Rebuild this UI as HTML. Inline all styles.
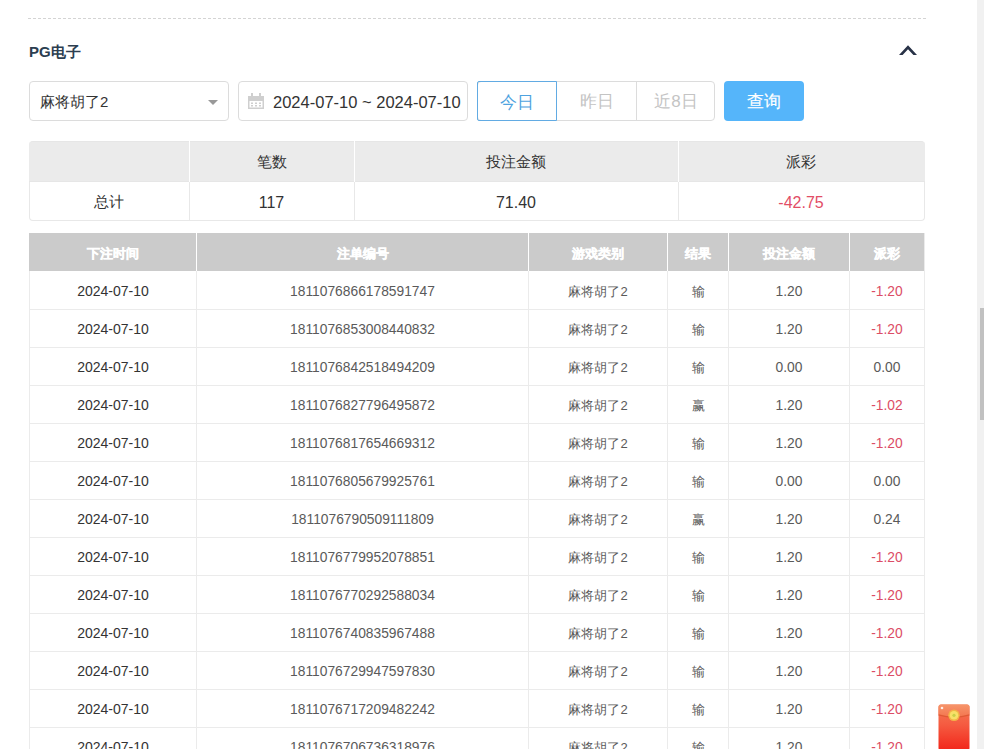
<!DOCTYPE html>
<html><head><meta charset="utf-8"><style>
*{box-sizing:border-box;margin:0;padding:0}
html,body{width:984px;height:749px;overflow:hidden;background:#fff;font-family:"Liberation Sans",sans-serif;color:#333}
div,span,svg{position:absolute}
.dash{left:28px;top:18px;width:898px;height:1px;background:repeating-linear-gradient(90deg,#d4d4d4 0 3px,transparent 3px 5px)}
.title{left:29px;top:43px;font-size:15px;font-weight:bold;color:#2c3e50;line-height:18px;white-space:nowrap}
.sel{left:29px;top:81px;width:200px;height:40px;border:1px solid #dcdcdc;border-radius:4px}
.sel .t{left:10px;top:1px;line-height:38px;font-size:15px;color:#333;white-space:nowrap}
.sel .tri{left:178px;top:18px;width:0;height:0;border-left:5px solid transparent;border-right:5px solid transparent;border-top:5px solid #999}
.date{left:238px;top:81px;width:230px;height:40px;border:1px solid #dcdcdc;border-radius:4px}
.date .t{left:34px;top:0;line-height:40px;font-size:16.5px;color:#333;white-space:nowrap}
.date svg{left:9px;top:11px}
.grp{left:477px;top:81px;width:238px;height:40px;border:1px solid #dcdcdc;border-radius:4px}
.grp .b{top:-1px;height:40px;line-height:40px;padding-top:1px;text-align:center;font-size:17px;color:#c4c4c4}
.grp .b1{left:-1px;width:80px;border:1px solid #62abe3;border-radius:2px 0 0 2px;color:#4fa3e0}
.grp .b2{left:79px;width:79px}
.grp .b3{left:158px;width:79px;border-left:1px solid #dcdcdc}
.q{left:724px;top:81px;width:80px;height:40px;border-radius:4px;background:#55b5fa;color:#fff;font-size:16.5px;font-weight:normal;-webkit-text-stroke:0.15px #fff;text-align:center;line-height:41px}
.c{text-align:center;white-space:nowrap}
.sbt{left:977px;top:0;width:7px;height:749px;background:#f1f1f1}
.sbth{left:980px;top:308px;width:4px;height:112px;background:#c1c1c1}
.env{left:938px;top:704px;width:32px;height:45px}
</style></head><body>
<div class="dash"></div><div class="title">PG电子</div>
<svg style="left:890px;top:40px" width="36" height="20" viewBox="890 40 36 20"><path d="M899 55 L908 45.3 L917 55 L913.4 55 L908 49.3 L902.6 55 Z" fill="#283247"/></svg>
<div class="sel"><span class="t">麻将胡了2</span><span class="tri"></span></div>
<div class="date"><svg width="16" height="17" viewBox="0 0 16 17"><g fill="#cfcfcf"><rect x="3" y="0" width="2" height="4"/><rect x="11" y="0" width="2" height="4"/><rect x="0" y="3" width="16" height="5"/><rect x="0" y="3" width="1.5" height="13"/><rect x="14.5" y="3" width="1.5" height="13"/><rect x="0" y="14.5" width="16" height="1.5"/><rect x="3" y="9.5" width="2" height="1.5"/><rect x="7" y="9.5" width="2" height="1.5"/><rect x="11" y="9.5" width="2" height="1.5"/><rect x="3" y="12" width="2" height="1.5"/><rect x="7" y="12" width="2" height="1.5"/><rect x="11" y="12" width="2" height="1.5"/></g></svg><span class="t">2024-07-10 ~ 2024-07-10</span></div>
<div class="grp"><div class="b b1">今日</div><div class="b b2">昨日</div><div class="b b3">近8日</div></div>
<div class="q">查询</div>
<div style="left:29px;top:141px;width:896px;height:41px;background:#ebebeb;border-radius:4px 4px 0 0;border-top:1px solid #e6e6e6;border-bottom:1px solid #e6e6e6"></div>
<div style="left:29px;top:182px;width:896px;height:39px;border:1px solid #e8e8e8;border-top:none;border-radius:0 0 4px 4px"></div>
<div style="left:189px;top:141px;width:1px;height:41px;background:#fff"></div>
<div style="left:189px;top:182px;width:1px;height:38px;background:#e8e8e8"></div>
<div style="left:354px;top:141px;width:1px;height:41px;background:#fff"></div>
<div style="left:354px;top:182px;width:1px;height:38px;background:#e8e8e8"></div>
<div style="left:678px;top:141px;width:1px;height:41px;background:#fff"></div>
<div style="left:678px;top:182px;width:1px;height:38px;background:#e8e8e8"></div>
<div class="c" style="left:29px;width:160px;top:182px;height:38px;line-height:40px;font-size:15px;color:#333">总计</div>
<div class="c" style="left:189px;width:165px;top:141px;height:41px;line-height:41px;font-size:15px;color:#333">笔数</div>
<div class="c" style="left:189px;width:165px;top:183px;height:38px;line-height:40px;font-size:16px;color:#333">117</div>
<div class="c" style="left:354px;width:324px;top:141px;height:41px;line-height:41px;font-size:15px;color:#333">投注金额</div>
<div class="c" style="left:354px;width:324px;top:183px;height:38px;line-height:40px;font-size:16px;color:#333">71.40</div>
<div class="c" style="left:678px;width:246px;top:141px;height:41px;line-height:41px;font-size:15px;color:#333">派彩</div>
<div class="c" style="left:678px;width:246px;top:183px;height:38px;line-height:40px;font-size:16px;color:#e24d66">-42.75</div>
<div style="left:29px;top:233px;width:896px;height:521px;border-left:1px solid #ebebeb;border-right:1px solid #ebebeb"></div>
<div style="left:29px;top:233px;width:895px;height:38px;background:#cbcbcb"></div>
<div style="left:196px;top:233px;width:1px;height:38px;background:#fff"></div>
<div style="left:196px;top:271px;width:1px;height:478px;background:#ebebeb"></div>
<div style="left:528px;top:233px;width:1px;height:38px;background:#fff"></div>
<div style="left:528px;top:271px;width:1px;height:478px;background:#ebebeb"></div>
<div style="left:667px;top:233px;width:1px;height:38px;background:#fff"></div>
<div style="left:667px;top:271px;width:1px;height:478px;background:#ebebeb"></div>
<div style="left:728px;top:233px;width:1px;height:38px;background:#fff"></div>
<div style="left:728px;top:271px;width:1px;height:478px;background:#ebebeb"></div>
<div style="left:849px;top:233px;width:1px;height:38px;background:#fff"></div>
<div style="left:849px;top:271px;width:1px;height:478px;background:#ebebeb"></div>
<div class="c" style="left:29px;width:168px;top:235px;height:38px;line-height:38px;font-size:13px;font-weight:bold;color:#fff;-webkit-text-stroke:0.35px #fff">下注时间</div>
<div class="c" style="left:196px;width:333px;top:235px;height:38px;line-height:38px;font-size:13px;font-weight:bold;color:#fff;-webkit-text-stroke:0.35px #fff">注单编号</div>
<div class="c" style="left:528px;width:140px;top:235px;height:38px;line-height:38px;font-size:13px;font-weight:bold;color:#fff;-webkit-text-stroke:0.35px #fff">游戏类别</div>
<div class="c" style="left:667px;width:62px;top:235px;height:38px;line-height:38px;font-size:13px;font-weight:bold;color:#fff;-webkit-text-stroke:0.35px #fff">结果</div>
<div class="c" style="left:728px;width:122px;top:235px;height:38px;line-height:38px;font-size:13px;font-weight:bold;color:#fff;-webkit-text-stroke:0.35px #fff">投注金额</div>
<div class="c" style="left:849px;width:76px;top:235px;height:38px;line-height:38px;font-size:13px;font-weight:bold;color:#fff;-webkit-text-stroke:0.35px #fff">派彩</div>
<div style="left:29px;top:309px;width:895px;height:1px;background:#ebebeb"></div>
<div class="c" style="left:29px;width:168px;top:272px;height:38px;line-height:38px;font-size:14px;color:#333">2024-07-10</div>
<div class="c" style="left:196px;width:333px;top:273px;height:38px;line-height:38px;font-size:13.8px;color:#5a5a5a">1811076866178591747</div>
<div class="c" style="left:528px;width:140px;top:273px;height:38px;line-height:38px;font-size:13px;color:#5a5a5a">麻将胡了2</div>
<div class="c" style="left:667px;width:62px;top:273px;height:38px;line-height:38px;font-size:13px;color:#5a5a5a">输</div>
<div class="c" style="left:728px;width:122px;top:273px;height:38px;line-height:38px;font-size:13.8px;color:#5a5a5a">1.20</div>
<div class="c" style="left:849px;width:76px;top:273px;height:38px;line-height:38px;font-size:13.8px;color:#dc4d66">-1.20</div>
<div style="left:29px;top:347px;width:895px;height:1px;background:#ebebeb"></div>
<div class="c" style="left:29px;width:168px;top:310px;height:38px;line-height:38px;font-size:14px;color:#333">2024-07-10</div>
<div class="c" style="left:196px;width:333px;top:311px;height:38px;line-height:38px;font-size:13.8px;color:#5a5a5a">1811076853008440832</div>
<div class="c" style="left:528px;width:140px;top:311px;height:38px;line-height:38px;font-size:13px;color:#5a5a5a">麻将胡了2</div>
<div class="c" style="left:667px;width:62px;top:311px;height:38px;line-height:38px;font-size:13px;color:#5a5a5a">输</div>
<div class="c" style="left:728px;width:122px;top:311px;height:38px;line-height:38px;font-size:13.8px;color:#5a5a5a">1.20</div>
<div class="c" style="left:849px;width:76px;top:311px;height:38px;line-height:38px;font-size:13.8px;color:#dc4d66">-1.20</div>
<div style="left:29px;top:385px;width:895px;height:1px;background:#ebebeb"></div>
<div class="c" style="left:29px;width:168px;top:348px;height:38px;line-height:38px;font-size:14px;color:#333">2024-07-10</div>
<div class="c" style="left:196px;width:333px;top:349px;height:38px;line-height:38px;font-size:13.8px;color:#5a5a5a">1811076842518494209</div>
<div class="c" style="left:528px;width:140px;top:349px;height:38px;line-height:38px;font-size:13px;color:#5a5a5a">麻将胡了2</div>
<div class="c" style="left:667px;width:62px;top:349px;height:38px;line-height:38px;font-size:13px;color:#5a5a5a">输</div>
<div class="c" style="left:728px;width:122px;top:349px;height:38px;line-height:38px;font-size:13.8px;color:#5a5a5a">0.00</div>
<div class="c" style="left:849px;width:76px;top:349px;height:38px;line-height:38px;font-size:13.8px;color:#5a5a5a">0.00</div>
<div style="left:29px;top:423px;width:895px;height:1px;background:#ebebeb"></div>
<div class="c" style="left:29px;width:168px;top:386px;height:38px;line-height:38px;font-size:14px;color:#333">2024-07-10</div>
<div class="c" style="left:196px;width:333px;top:387px;height:38px;line-height:38px;font-size:13.8px;color:#5a5a5a">1811076827796495872</div>
<div class="c" style="left:528px;width:140px;top:387px;height:38px;line-height:38px;font-size:13px;color:#5a5a5a">麻将胡了2</div>
<div class="c" style="left:667px;width:62px;top:387px;height:38px;line-height:38px;font-size:13px;color:#5a5a5a">赢</div>
<div class="c" style="left:728px;width:122px;top:387px;height:38px;line-height:38px;font-size:13.8px;color:#5a5a5a">1.20</div>
<div class="c" style="left:849px;width:76px;top:387px;height:38px;line-height:38px;font-size:13.8px;color:#dc4d66">-1.02</div>
<div style="left:29px;top:461px;width:895px;height:1px;background:#ebebeb"></div>
<div class="c" style="left:29px;width:168px;top:424px;height:38px;line-height:38px;font-size:14px;color:#333">2024-07-10</div>
<div class="c" style="left:196px;width:333px;top:425px;height:38px;line-height:38px;font-size:13.8px;color:#5a5a5a">1811076817654669312</div>
<div class="c" style="left:528px;width:140px;top:425px;height:38px;line-height:38px;font-size:13px;color:#5a5a5a">麻将胡了2</div>
<div class="c" style="left:667px;width:62px;top:425px;height:38px;line-height:38px;font-size:13px;color:#5a5a5a">输</div>
<div class="c" style="left:728px;width:122px;top:425px;height:38px;line-height:38px;font-size:13.8px;color:#5a5a5a">1.20</div>
<div class="c" style="left:849px;width:76px;top:425px;height:38px;line-height:38px;font-size:13.8px;color:#dc4d66">-1.20</div>
<div style="left:29px;top:499px;width:895px;height:1px;background:#ebebeb"></div>
<div class="c" style="left:29px;width:168px;top:462px;height:38px;line-height:38px;font-size:14px;color:#333">2024-07-10</div>
<div class="c" style="left:196px;width:333px;top:463px;height:38px;line-height:38px;font-size:13.8px;color:#5a5a5a">1811076805679925761</div>
<div class="c" style="left:528px;width:140px;top:463px;height:38px;line-height:38px;font-size:13px;color:#5a5a5a">麻将胡了2</div>
<div class="c" style="left:667px;width:62px;top:463px;height:38px;line-height:38px;font-size:13px;color:#5a5a5a">输</div>
<div class="c" style="left:728px;width:122px;top:463px;height:38px;line-height:38px;font-size:13.8px;color:#5a5a5a">0.00</div>
<div class="c" style="left:849px;width:76px;top:463px;height:38px;line-height:38px;font-size:13.8px;color:#5a5a5a">0.00</div>
<div style="left:29px;top:537px;width:895px;height:1px;background:#ebebeb"></div>
<div class="c" style="left:29px;width:168px;top:500px;height:38px;line-height:38px;font-size:14px;color:#333">2024-07-10</div>
<div class="c" style="left:196px;width:333px;top:501px;height:38px;line-height:38px;font-size:13.8px;color:#5a5a5a">1811076790509111809</div>
<div class="c" style="left:528px;width:140px;top:501px;height:38px;line-height:38px;font-size:13px;color:#5a5a5a">麻将胡了2</div>
<div class="c" style="left:667px;width:62px;top:501px;height:38px;line-height:38px;font-size:13px;color:#5a5a5a">赢</div>
<div class="c" style="left:728px;width:122px;top:501px;height:38px;line-height:38px;font-size:13.8px;color:#5a5a5a">1.20</div>
<div class="c" style="left:849px;width:76px;top:501px;height:38px;line-height:38px;font-size:13.8px;color:#5a5a5a">0.24</div>
<div style="left:29px;top:575px;width:895px;height:1px;background:#ebebeb"></div>
<div class="c" style="left:29px;width:168px;top:538px;height:38px;line-height:38px;font-size:14px;color:#333">2024-07-10</div>
<div class="c" style="left:196px;width:333px;top:539px;height:38px;line-height:38px;font-size:13.8px;color:#5a5a5a">1811076779952078851</div>
<div class="c" style="left:528px;width:140px;top:539px;height:38px;line-height:38px;font-size:13px;color:#5a5a5a">麻将胡了2</div>
<div class="c" style="left:667px;width:62px;top:539px;height:38px;line-height:38px;font-size:13px;color:#5a5a5a">输</div>
<div class="c" style="left:728px;width:122px;top:539px;height:38px;line-height:38px;font-size:13.8px;color:#5a5a5a">1.20</div>
<div class="c" style="left:849px;width:76px;top:539px;height:38px;line-height:38px;font-size:13.8px;color:#dc4d66">-1.20</div>
<div style="left:29px;top:613px;width:895px;height:1px;background:#ebebeb"></div>
<div class="c" style="left:29px;width:168px;top:576px;height:38px;line-height:38px;font-size:14px;color:#333">2024-07-10</div>
<div class="c" style="left:196px;width:333px;top:577px;height:38px;line-height:38px;font-size:13.8px;color:#5a5a5a">1811076770292588034</div>
<div class="c" style="left:528px;width:140px;top:577px;height:38px;line-height:38px;font-size:13px;color:#5a5a5a">麻将胡了2</div>
<div class="c" style="left:667px;width:62px;top:577px;height:38px;line-height:38px;font-size:13px;color:#5a5a5a">输</div>
<div class="c" style="left:728px;width:122px;top:577px;height:38px;line-height:38px;font-size:13.8px;color:#5a5a5a">1.20</div>
<div class="c" style="left:849px;width:76px;top:577px;height:38px;line-height:38px;font-size:13.8px;color:#dc4d66">-1.20</div>
<div style="left:29px;top:651px;width:895px;height:1px;background:#ebebeb"></div>
<div class="c" style="left:29px;width:168px;top:614px;height:38px;line-height:38px;font-size:14px;color:#333">2024-07-10</div>
<div class="c" style="left:196px;width:333px;top:615px;height:38px;line-height:38px;font-size:13.8px;color:#5a5a5a">1811076740835967488</div>
<div class="c" style="left:528px;width:140px;top:615px;height:38px;line-height:38px;font-size:13px;color:#5a5a5a">麻将胡了2</div>
<div class="c" style="left:667px;width:62px;top:615px;height:38px;line-height:38px;font-size:13px;color:#5a5a5a">输</div>
<div class="c" style="left:728px;width:122px;top:615px;height:38px;line-height:38px;font-size:13.8px;color:#5a5a5a">1.20</div>
<div class="c" style="left:849px;width:76px;top:615px;height:38px;line-height:38px;font-size:13.8px;color:#dc4d66">-1.20</div>
<div style="left:29px;top:689px;width:895px;height:1px;background:#ebebeb"></div>
<div class="c" style="left:29px;width:168px;top:652px;height:38px;line-height:38px;font-size:14px;color:#333">2024-07-10</div>
<div class="c" style="left:196px;width:333px;top:653px;height:38px;line-height:38px;font-size:13.8px;color:#5a5a5a">1811076729947597830</div>
<div class="c" style="left:528px;width:140px;top:653px;height:38px;line-height:38px;font-size:13px;color:#5a5a5a">麻将胡了2</div>
<div class="c" style="left:667px;width:62px;top:653px;height:38px;line-height:38px;font-size:13px;color:#5a5a5a">输</div>
<div class="c" style="left:728px;width:122px;top:653px;height:38px;line-height:38px;font-size:13.8px;color:#5a5a5a">1.20</div>
<div class="c" style="left:849px;width:76px;top:653px;height:38px;line-height:38px;font-size:13.8px;color:#dc4d66">-1.20</div>
<div style="left:29px;top:727px;width:895px;height:1px;background:#ebebeb"></div>
<div class="c" style="left:29px;width:168px;top:690px;height:38px;line-height:38px;font-size:14px;color:#333">2024-07-10</div>
<div class="c" style="left:196px;width:333px;top:691px;height:38px;line-height:38px;font-size:13.8px;color:#5a5a5a">1811076717209482242</div>
<div class="c" style="left:528px;width:140px;top:691px;height:38px;line-height:38px;font-size:13px;color:#5a5a5a">麻将胡了2</div>
<div class="c" style="left:667px;width:62px;top:691px;height:38px;line-height:38px;font-size:13px;color:#5a5a5a">输</div>
<div class="c" style="left:728px;width:122px;top:691px;height:38px;line-height:38px;font-size:13.8px;color:#5a5a5a">1.20</div>
<div class="c" style="left:849px;width:76px;top:691px;height:38px;line-height:38px;font-size:13.8px;color:#dc4d66">-1.20</div>
<div style="left:29px;top:765px;width:895px;height:1px;background:#ebebeb"></div>
<div class="c" style="left:29px;width:168px;top:728px;height:38px;line-height:38px;font-size:14px;color:#333">2024-07-10</div>
<div class="c" style="left:196px;width:333px;top:729px;height:38px;line-height:38px;font-size:13.8px;color:#5a5a5a">1811076706736318976</div>
<div class="c" style="left:528px;width:140px;top:729px;height:38px;line-height:38px;font-size:13px;color:#5a5a5a">麻将胡了2</div>
<div class="c" style="left:667px;width:62px;top:729px;height:38px;line-height:38px;font-size:13px;color:#5a5a5a">输</div>
<div class="c" style="left:728px;width:122px;top:729px;height:38px;line-height:38px;font-size:13.8px;color:#5a5a5a">1.20</div>
<div class="c" style="left:849px;width:76px;top:729px;height:38px;line-height:38px;font-size:13.8px;color:#dc4d66">-1.20</div>
<div class="sbt"></div><div class="sbth"></div>
<svg class="env" viewBox="0 0 32 45">
<defs><linearGradient id="eg" x1="0" y1="0" x2="0" y2="1"><stop offset="0" stop-color="#f47a55"/><stop offset="0.45" stop-color="#f55a40"/><stop offset="1" stop-color="#f2261a"/></linearGradient>
<linearGradient id="fg" x1="0" y1="0" x2="0" y2="1"><stop offset="0" stop-color="#f6956a"/><stop offset="1" stop-color="#f47650"/></linearGradient></defs>
<rect x="0.5" y="0.5" width="31" height="46" rx="2.5" fill="url(#eg)"/>
<path d="M0.5 10.5 Q16 15 31.5 10.5 L31.5 3 Q31.5 0.5 29 0.5 L3 0.5 Q0.5 0.5 0.5 3 Z" fill="url(#fg)"/>
<path d="M0.5 10.8 Q16 15.3 31.5 10.8" fill="none" stroke="#d9552f" stroke-width="1.3" opacity=".8"/>
<circle cx="16" cy="11.3" r="5.8" fill="#f3b447"/><circle cx="16" cy="11.3" r="4.3" fill="#f7e068"/><circle cx="16" cy="11.3" r="1.6" fill="#c9cf48"/>
<circle cx="4" cy="4" r="1.3" fill="#fff" opacity=".85"/>
</svg>
</body></html>
